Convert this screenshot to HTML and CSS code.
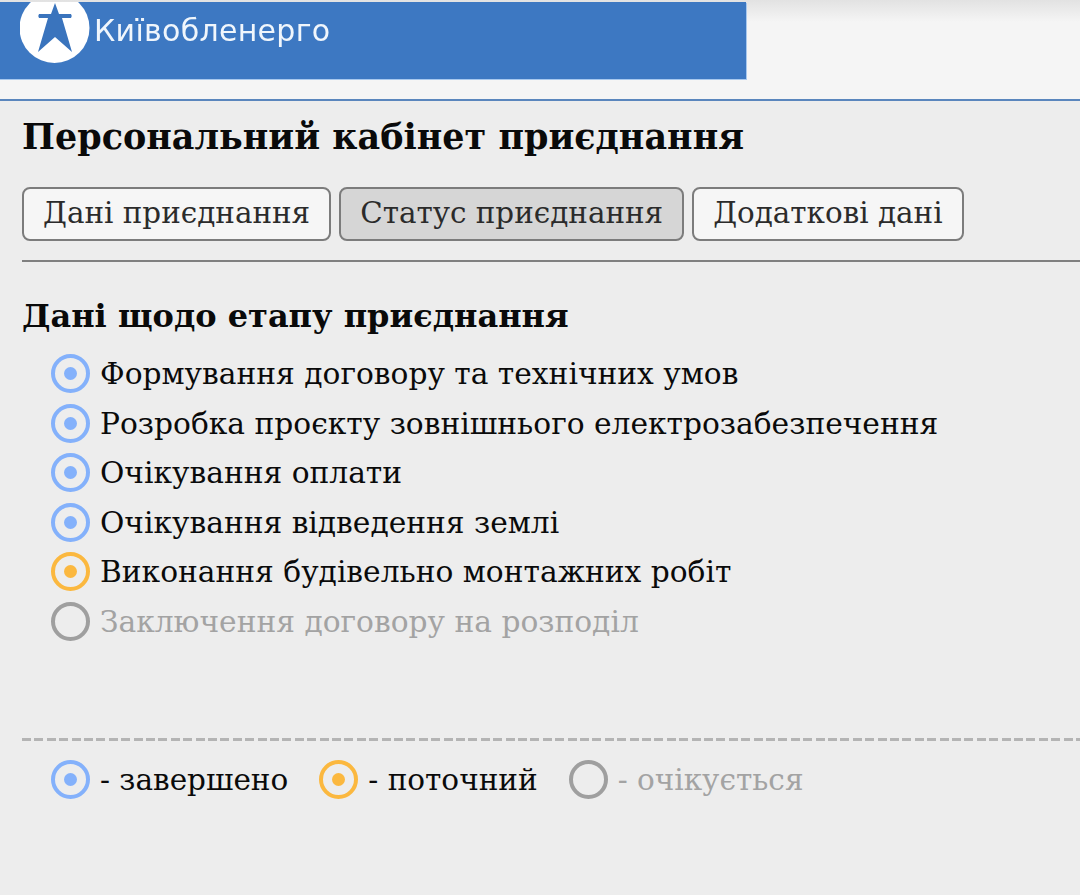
FILE: index.html
```html
<!DOCTYPE html>
<html lang="uk">
<head>
<meta charset="utf-8">
<title>Персональний кабінет приєднання</title>
<link rel="stylesheet" href="styles.css">
</head>
<body>
<header class="header">
  <div class="banner">
    <svg class="logo" width="70" height="62" viewBox="0 0 70 62">
      <circle cx="34.5" cy="26" r="35" fill="#fff"/>
      <path d="M35 1 L39 12 L51 12 Q52.500 14 51 16 L42 16 L52 50 L35 35 L18 50 L28 16 L19 16 Q17.500 14 19 12 L31 12 Z" fill="#3a74bd"/>
    </svg>
    <span class="brand">Київобленерго</span>
  </div>
</header>
<main class="content">
  <h1 class="title">Персональний кабінет приєднання</h1>
  <nav class="tabs">
    <button class="tab">Дані приєднання</button>
    <button class="tab tab-active">Статус приєднання</button>
    <button class="tab">Додаткові дані</button>
  </nav>
  <hr class="rule">
  <h2 class="subtitle">Дані щодо етапу приєднання</h2>
  <ul class="steps">
    <li class="step"><span class="dot done"></span>Формування договору та технічних умов</li>
    <li class="step"><span class="dot done"></span>Розробка проєкту зовнішнього електрозабезпечення</li>
    <li class="step"><span class="dot done"></span>Очікування оплати</li>
    <li class="step"><span class="dot done"></span>Очікування відведення землі</li>
    <li class="step"><span class="dot current"></span>Виконання будівельно монтажних робіт</li>
    <li class="step pending"><span class="dot wait"></span>Заключення договору на розподіл</li>
  </ul>
  <div class="legend">
    <span class="legend-item"><span class="dot done"></span>- завершено</span>
    <span class="legend-item"><span class="dot current"></span>- поточний</span>
    <span class="legend-item pending"><span class="dot wait"></span>- очікується</span>
  </div>
</main>
</body>
</html>
```
FILE: styles.css
```css
* { box-sizing: border-box; }
html, body { margin: 0; padding: 0; }
body {
  width: 1080px;
  height: 895px;
  overflow: hidden;
  background: #ededed;
  color: #0a0a0a;
  font-family: "DejaVu Serif", serif;
}
.header {
  height: 101px;
  padding-top: 2px;
  background: linear-gradient(#e2e2e2, #f5f5f5 22px);
  border-bottom: 2px solid #5a86bd;
}
.banner {
  width: 746px;
  height: 77px;
  background: #3d78c2;
  box-shadow: 1px 1px 0 #a8c8ee, 0 1px 0 #a8c8ee;
  display: flex;
  align-items: flex-start;
  padding-left: 20px;
  overflow: hidden;
}
.logo { flex: none; margin-right: 4px; }
.brand {
  font-family: "DejaVu Sans", sans-serif;
  font-size: 30px;
  letter-spacing: 0.3px;
  line-height: 30px;
  margin-top: 14px;
  color: #f0f6fc;
  filter: blur(0.4px);
}
.content { padding: 0 0 0 22px; }
.title {
  margin: 16px 0 0;
  font-size: 34.950px;
  line-height: 40px;
  font-weight: 700;
}
.tabs { display: flex; gap: 8px; margin-top: 30px; }
.tab {
  height: 54px;
  padding: 0 19px;
  font: 400 29.400px/1 "DejaVu Serif", serif;
  color: #2b2b2b;
  background: #f6f6f6;
  border: 2px solid #7c7c7c;
  border-radius: 8px;
}
.tab-active { background: #d6d6d6; }
.rule {
  margin: 19px 0 0;
  height: 2px;
  border: 0;
  background: #808080;
}
.subtitle {
  margin: 34px 0 0;
  font-size: 32px;
  line-height: 40px;
  font-weight: 700;
}
.steps { list-style: none; margin: 13px 0 0; padding: 0 0 0 29px; }
.step {
  display: flex;
  align-items: center;
  height: 49.500px;
  font-size: 29.700px;
  white-space: nowrap;
}
.dot {
  flex: none;
  width: 39px;
  height: 39px;
  margin-right: 10px;
  border-radius: 50%;
  border: 4px solid;
  display: flex;
  align-items: center;
  justify-content: center;
}
.dot::after {
  content: "";
  width: 13px;
  height: 13px;
  border-radius: 50%;
  background: currentColor;
}
.done { color: #84b1fb; }
.current { color: #fbb83f; }
.wait { color: #9f9f9f; }
.wait::after { display: none; }
.pending { color: #a3a3a3; }
.legend {
  margin-top: 92px;
  padding: 22px 0 0 29px;
  background: repeating-linear-gradient(90deg, #b4b4b4 0 9px, transparent 9px 12.400px) top / 100% 3px no-repeat;
  display: flex;
  gap: 31px;
  font-size: 29.500px;
}
.legend-item { display: flex; align-items: center; white-space: nowrap; }
```
